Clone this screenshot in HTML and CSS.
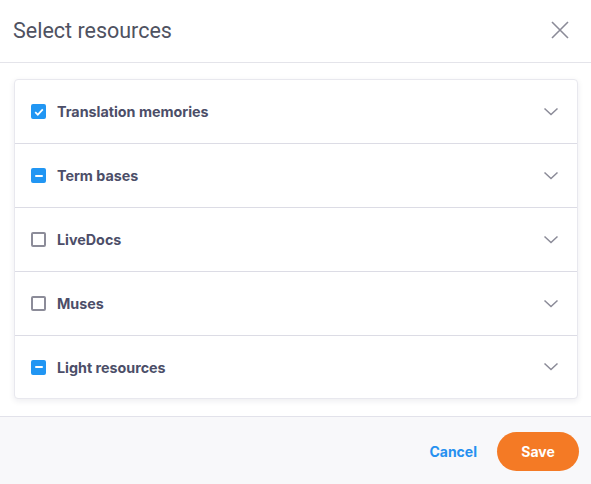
FILE: index.html
```html
<!DOCTYPE html>
<html>
<head>
<meta charset="utf-8">
<link rel="stylesheet" href="styles.css">
</head>
<body>
<div class="dialog">
  <header class="header">
    <h1 class="title">Select resources</h1>
    <button class="close" aria-label="Close">
      <svg width="18" height="18" viewBox="0 0 18 18"><path d="M1 1L17 17M17 1L1 17" stroke="#8b8b98" stroke-width="1.6" fill="none"/></svg>
    </button>
  </header>
  <main class="body">
    <div class="card">
      <div class="row">
        <span class="cb checked"><svg width="14" height="14" viewBox="0 0 14 14"><path d="M3.2 7.2L5.8 9.7L10.8 4.4" stroke="#fff" stroke-width="1.7" fill="none"/></svg></span>
        <span class="label">Translation memories</span>
        <svg class="chev" width="16" height="10" viewBox="0 0 16 10"><path d="M1.5 1.5L8 7.5L14.5 1.5" stroke="#8b8b98" stroke-width="1.5" fill="none"/></svg>
      </div>
      <div class="row">
        <span class="cb checked"><span class="dash"></span></span>
        <span class="label">Term bases</span>
        <svg class="chev" width="16" height="10" viewBox="0 0 16 10"><path d="M1.5 1.5L8 7.5L14.5 1.5" stroke="#8b8b98" stroke-width="1.5" fill="none"/></svg>
      </div>
      <div class="row">
        <span class="cb"></span>
        <span class="label">LiveDocs</span>
        <svg class="chev" width="16" height="10" viewBox="0 0 16 10"><path d="M1.5 1.5L8 7.5L14.5 1.5" stroke="#8b8b98" stroke-width="1.5" fill="none"/></svg>
      </div>
      <div class="row">
        <span class="cb"></span>
        <span class="label">Muses</span>
        <svg class="chev" width="16" height="10" viewBox="0 0 16 10"><path d="M1.5 1.5L8 7.5L14.5 1.5" stroke="#8b8b98" stroke-width="1.5" fill="none"/></svg>
      </div>
      <div class="row">
        <span class="cb checked"><span class="dash"></span></span>
        <span class="label">Light resources</span>
        <svg class="chev" width="16" height="10" viewBox="0 0 16 10"><path d="M1.5 1.5L8 7.5L14.5 1.5" stroke="#8b8b98" stroke-width="1.5" fill="none"/></svg>
      </div>
    </div>
  </main>
  <footer class="footer">
    <button class="cancel">Cancel</button>
    <button class="save">Save</button>
  </footer>
</div>
</body>
</html>
```
FILE: styles.css
```css
* { box-sizing: border-box; }
html, body { margin: 0; padding: 0; background: #fff; }
body { font-family: Inter, "Noto Sans", sans-serif; width: 591px; height: 484px; overflow: hidden; }
.dialog { display: flex; flex-direction: column; height: 484px; }
.header {
  height: 63px;
  display: flex;
  align-items: center;
  justify-content: space-between;
  padding: 0 22px 2px 13px;
  border-bottom: 1px solid #e4e4ea;
}
.title {
  margin: 0;
  font-family: Roboto, sans-serif;
  font-weight: 400;
  font-size: 21.5px;
  color: #4f5261;
  letter-spacing: 0;
}
.close { background: none; border: 0; padding: 0; width: 18px; height: 18px; display: flex; }
.body { padding: 16px 13px 17px 14px; }
.card {
  border: 1px solid #e8e8ee;
  border-radius: 4px;
  box-shadow: 0 2px 6px rgba(30, 30, 60, 0.08);
  background: #fff;
}
.row {
  height: 64px;
  display: flex;
  align-items: center;
  padding: 0 18px 0 16px;
  border-bottom: 1px solid #dcdce5;
}
.row:last-child { height: 62px; border-bottom: 0; }
.cb {
  width: 15px;
  height: 15px;
  border: 2px solid #8c8c99;
  border-radius: 2px;
  display: flex;
  align-items: center;
  justify-content: center;
  flex: none;
}
.cb.checked { background: #2196f3; border-color: #2196f3; }
.cb.checked svg { margin: -2px; }
.dash { width: 8px; height: 2px; background: #fff; border-radius: 1px; }
.label {
  margin-left: 11px;
  font-weight: 700;
  font-size: 14.3px;
  color: #4c4e68;
  flex: 1;
}
.chev { flex: none; }
.footer {
  flex: 1;
  background: #f8f8fa;
  border-top: 1px solid #e2e2ea;
  display: flex;
  align-items: center;
  justify-content: flex-end;
  padding: 1px 12px 0 0;
  gap: 20px;
}
.cancel {
  background: none;
  border: 0;
  padding: 0;
  font-family: Inter, sans-serif;
  font-weight: 700;
  font-size: 14px;
  color: #2690f0;
}
.save {
  width: 82px;
  height: 39px;
  border: 0;
  border-radius: 20px;
  background: #f47a25;
  color: #fff;
  font-family: Inter, sans-serif;
  font-weight: 700;
  font-size: 14px;
}
```
